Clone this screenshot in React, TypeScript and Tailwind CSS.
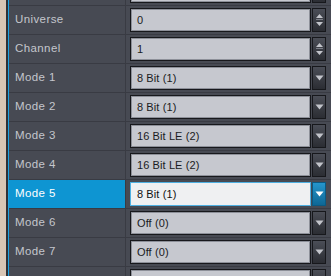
type Row = {
  label: string;
  value: string;
  kind: "spin" | "select";
  active?: boolean;
};

const rows: Row[] = [
  { label: "", value: "", kind: "select" },
  { label: "Universe", value: "0", kind: "spin" },
  { label: "Channel", value: "1", kind: "spin" },
  { label: "Mode 1", value: "8 Bit (1)", kind: "select" },
  { label: "Mode 2", value: "8 Bit (1)", kind: "select" },
  { label: "Mode 3", value: "16 Bit LE (2)", kind: "select" },
  { label: "Mode 4", value: "16 Bit LE (2)", kind: "select" },
  { label: "Mode 5", value: "8 Bit (1)", kind: "select", active: true },
  { label: "Mode 6", value: "Off (0)", kind: "select" },
  { label: "Mode 7", value: "Off (0)", kind: "select" },
  { label: "", value: "", kind: "select" },
];

function SpinIcon() {
  return (
    <svg width="9" height="16" viewBox="0 0 9 16">
      <path d="M4.5 2 L8 6 H1 Z" fill="#c3c5cb" />
      <path d="M1 7.5 H8" stroke="#7c7f88" strokeWidth="1" />
      <path d="M1 10 H8 L4.5 14 Z" fill="#c3c5cb" />
    </svg>
  );
}

function DropIcon({ active }: { active?: boolean }) {
  return (
    <svg width="9" height="6" viewBox="0 0 9 6">
      <path d="M0.5 0.5 H8.5 L4.5 5.5 Z" fill={active ? "#ffffff" : "#c3c5cb"} />
    </svg>
  );
}

function PropRow({ row }: { row: Row }) {
  return (
    <div className="flex h-[29px] border-b border-[#393b43]">
      <div
        className={`flex w-[116px] items-center pl-[6px] text-[11.5px] tracking-[0.4px] ${
          row.active ? "bg-[#0e95d2] text-white" : "text-[#c4c6cc]"
        }`}
      >
        {row.label}
      </div>
      <div className="w-px bg-[#393b43]" />
      <div className="flex flex-1 items-center pl-[4px] pr-[5px]">
        <div
          className={`flex h-[24px] flex-1 items-center border pl-[6px] text-[11px] tracking-[0.1px] ${
            row.active
              ? "border-[#4fb0e2] bg-[#eff0f2] text-[#111]"
              : "border-[#17181c] bg-[#c6c8cf] text-[#1a1b22] shadow-[inset_0_0_0_1px_#8d9099]"
          }`}
        >
          {row.value}
        </div>
        <div
          className={`ml-px flex h-[24px] w-[14px] items-center justify-center border ${
            row.active
              ? "border-[#0b5a83] bg-gradient-to-b from-[#2596cc] to-[#0e6795]"
              : "border-[#17181c] bg-gradient-to-b from-[#4b4e57] to-[#2b2d33]"
          }`}
        >
          {row.kind === "spin" ? <SpinIcon /> : <DropIcon active={row.active} />}
        </div>
      </div>
    </div>
  );
}

export default function App() {
  return (
    <div className="flex h-[276px] w-[331px] overflow-hidden bg-[#474a53] font-['Liberation_Sans',Arial,sans-serif]">
      <div className="w-[6px] bg-[#d8c6b5]" />
      <div className="w-[2px] bg-[#2f3137]" />
      <div className="w-px bg-[#1aa3e4]" />
      <div className="flex flex-1 flex-col">
        <div className="mt-[-23px]">
          {rows.map((row, i) => (
            <PropRow key={i} row={row} />
          ))}
        </div>
      </div>
    </div>
  );
}
